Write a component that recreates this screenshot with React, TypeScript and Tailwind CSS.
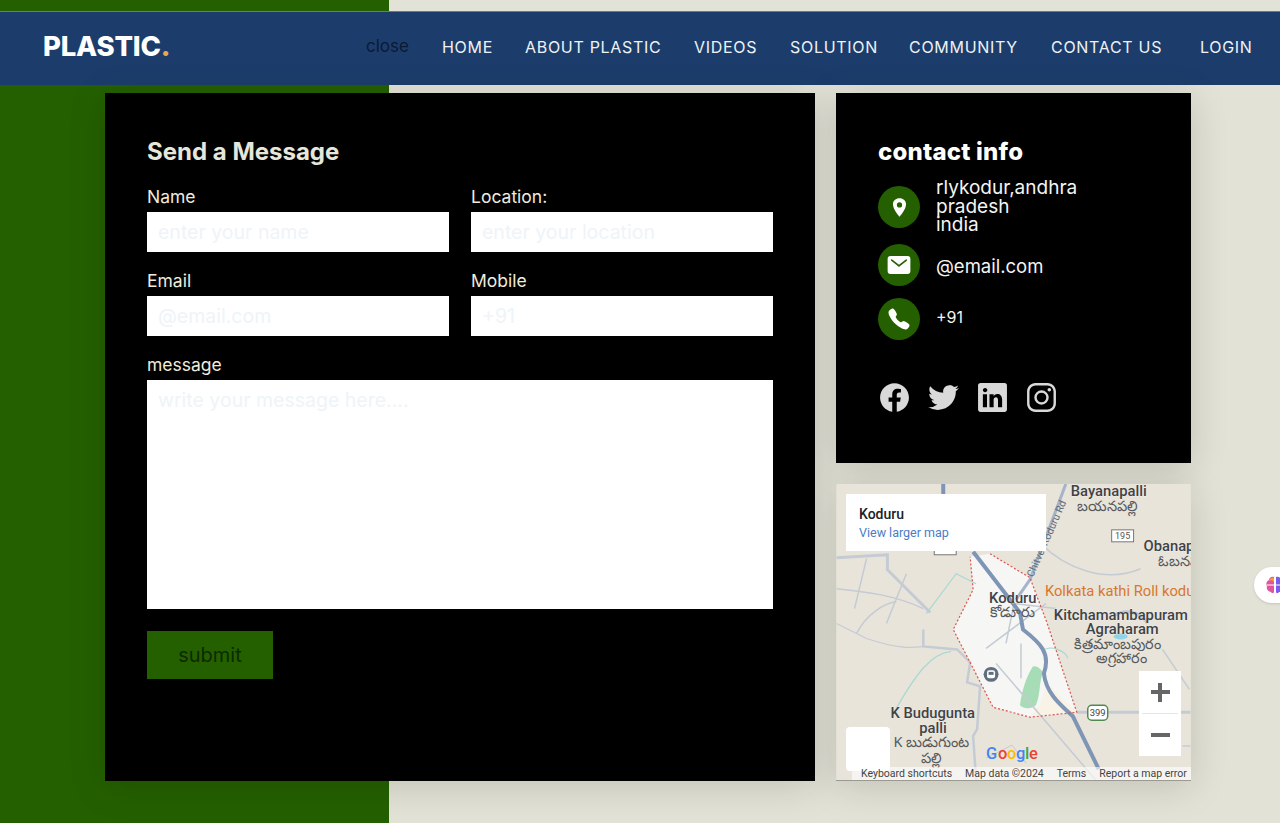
import { IoCall, IoLocationSharp, IoLogoFacebook, IoLogoInstagram, IoLogoLinkedin, IoLogoTwitter, IoMail } from "react-icons/io5";

const navItems = [
  { label: "HOME", width: "w-[51px]" },
  { label: "ABOUT PLASTIC", width: "w-[137px]" },
  { label: "VIDEOS", width: "w-[64px]" },
  { label: "SOLUTION", width: "w-[87px]" },
  { label: "COMMUNITY", width: "w-[110px]" },
  { label: "CONTACT US", width: "w-[117px]" },
  { label: "LOGIN", width: "w-[54px]" },
];

const inputClass =
  "w-full h-10 bg-white px-[11px] text-[19.5px] text-black placeholder-[#eef4f8] outline-none";

function Field({ label, placeholder }: { label: string; placeholder: string }) {
  return (
    <label className="flex flex-col">
      <span className="h-6 text-[17.5px] leading-[18px] text-[#f0ebdc]">{label}</span>
      <input placeholder={placeholder} className={inputClass} />
    </label>
  );
}

function MapDrawing() {
  return (
    <svg viewBox="0 0 355 297" className="block w-full h-full" fontFamily="Roboto, sans-serif">
      <rect width="355" height="297" fill="#e8e4da" />
      {/* town area */}
      <path d="M154 70 194 94 211 139 241 229 194 234 157 224 117 146 137 106 134 73Z" fill="#f6f6f5" />
      <path d="M184 222C186 205 192 190 197 183 201 182 206 186 207 190 203 198 205 210 200 222 195 226 188 226 184 222Z" fill="#a6dcb6" />
      <path d="M211 200 241 229 194 234 204 222Z" fill="#f8f3e6" />
      {/* small roads */}
      <g fill="none" stroke="#c4cbd4" strokeWidth="1.5">
        <path d="M0 74 51 71V86L94 129" strokeWidth="3" />
        <path d="M0 105C30 108 60 112 87 125M20 150C30 130 48 120 60 118M30 75 18 125M70 90 50 140" />
        <path d="M87 146V163L121 166 134 179 131 199 144 203 141 246 137 253 140 297" strokeWidth="2.5" />
        <path d="M0 140 30 155C60 165 75 165 87 163" strokeWidth="1.2" />
        <path d="M150 165 210 120M160 180 260 297M170 160 178 120 220 125M185 160V195" />
        <path d="M241 229H355" strokeWidth="3" />
        <path d="M205 60C230 85 270 100 305 85M327 166 354 206M347 263H355" />
        <path d="M190 280 176 262 150 275" strokeWidth="1" />
      </g>
      <path d="M60 225C80 190 95 170 115 168M90 130 120 90 140 100" fill="none" stroke="#a9d8d4" strokeWidth="1.2" />
      <path d="M206 168C215 160 230 168 232 175" fill="none" stroke="#a9d8d4" strokeWidth="1.2" />
      <path d="M278 132C290 125 305 128 312 140" fill="none" stroke="#b9c6d6" strokeWidth="3" />
      <ellipse cx="285" cy="153" rx="7" ry="3" fill="#8fd3e8" />
      {/* highways */}
      <path d="M107 0V12M137 68 184 129 187 146C205 160 215 170 208 190 210 210 225 222 237 233L263 286" fill="none" stroke="#7f95b5" strokeWidth="4" />
      <path d="M230 0 194 96 180 116" fill="none" stroke="#a5b4c8" strokeWidth="3" />
      {/* boundary */}
      <path d="M154 70 194 94 211 139 241 229 194 234 157 224 117 146 137 106 134 73" fill="none" stroke="#d9534f" strokeWidth="1.2" strokeDasharray="2 2" />
      {/* station pin */}
      <circle cx="155" cy="191" r="7.5" fill="#5f6f7e" />
      <rect x="151" y="187" width="8" height="8" rx="2" fill="#fff" />
      <rect x="152.5" y="188.5" width="5" height="3" fill="#5f6f7e" />
      {/* shields */}
      <rect x="98" y="60" width="22" height="11" fill="#fff" stroke="#777" />
      <rect x="276" y="46" width="22" height="12" fill="#fff" stroke="#777" />
      <text x="287" y="55.5" fontSize="9" textAnchor="middle" fill="#555">195</text>
      <rect x="252" y="222" width="20" height="15" rx="4" fill="#fff" stroke="#4f8a4f" strokeWidth="1.5" />
      <text x="262" y="233" fontSize="9.5" textAnchor="middle" fill="#444">399</text>
      {/* labels */}
      <g fill="#3f4246" fontWeight="500" fontSize="14.8" stroke="#fff" strokeWidth="0.3" paintOrder="stroke">
        <text x="235" y="12">Bayanapalli</text>
        <text x="308" y="67">Obanap</text>
        <text x="153" y="119">Koduru</text>
        <text x="218" y="136">Kitchamambapuram</text>
        <text x="250" y="151">Agraharam</text>
        <text x="54" y="235">K Budugunta</text>
        <text x="83" y="250">palli</text>
      </g>
      <g fill="#55585c" fontSize="14.5" fontFamily="'Noto Sans', 'DejaVu Sans', sans-serif">
        <text x="241" y="27">బయనపల్లి</text>
        <text x="322" y="82">ఓబనప</text>
        <text x="154" y="133">కోడూరు</text>
        <text x="238" y="166">కిత్రమాంబపురం</text>
        <text x="260" y="180">అగ్రహారం</text>
        <text x="57" y="264">K బుడుగుంట</text>
        <text x="85" y="280">పల్లి</text>
      </g>
      <text x="209" y="112" fontSize="14.8" fill="#d9772b">Kolkata kathi Roll kodu</text>
      <text x="0" y="0" fontSize="10.5" fill="#5d6b7a" transform="translate(197 94) rotate(-66)">Chitvel Koduru Rd</text>
      <g fontSize="16.5" fontWeight="500">
        <text x="150" y="276" fill="#4285f4">G</text>
        <text x="162" y="276" fill="#ea4335">o</text>
        <text x="171" y="276" fill="#fbbc05">o</text>
        <text x="180" y="276" fill="#4285f4">g</text>
        <text x="189" y="276" fill="#34a853">l</text>
        <text x="193" y="276" fill="#ea4335">e</text>
      </g>
    </svg>
  );
}

function MapPanel() {
  return (
    <div className="relative h-[297px] shadow-[0_5px_35px_rgba(0,0,0,0.15)] border-b border-[#9a9a92]">
      <MapDrawing />
      <div className="absolute left-[10px] top-[10px] w-[200px] h-[57px] bg-white pl-[13px] pt-[11px] font-['Roboto',sans-serif]">
        <p className="text-[14px] leading-[18px] font-medium text-[#202124]">Koduru</p>
        <p className="text-[12.5px] leading-[20px] text-[#4a7cc4]">View larger map</p>
      </div>
      <div className="absolute left-[10px] top-[243px] w-[44px] h-[44px] rounded-sm bg-white" />
      <div className="absolute left-[303px] top-[187px] w-[42px] h-[85px] bg-white flex flex-col items-center text-[#666]">
        <div className="h-[42px] w-full flex items-center justify-center">
          <span className="block relative w-[19px] h-[19px] bg-[linear-gradient(#666,#666),linear-gradient(#666,#666)] bg-no-repeat bg-center bg-[length:19px_4px,4px_19px]" />
        </div>
        <div className="h-px w-[36px] bg-[#e6e6e6]" />
        <div className="h-[42px] w-full flex items-center justify-center">
          <span className="block w-[19px] h-1 bg-[#666]" />
        </div>
      </div>
      <div className="absolute left-[16px] right-0 bottom-0 h-[13px] bg-white/60 flex items-center gap-[13px] pl-[9px] text-[10.5px] whitespace-nowrap text-[#444] font-['Roboto',sans-serif]">
        <span>Keyboard shortcuts</span>
        <span>Map data ©2024</span>
        <span>Terms</span>
        <span>Report a map error</span>
      </div>
    </div>
  );
}

export default function App() {
  return (
    <div className="relative h-[823px] overflow-hidden pt-[11px] bg-[linear-gradient(to_right,#246000_389px,#e2e2d6_389px)] font-['Inter',sans-serif]">
      <header className="h-[74px] pb-[3px] bg-[#1c3d6b] border-t border-[#5f7a9c] flex items-center pl-[43px] pr-[26px]">
        <div className="text-[27.5px] font-extrabold text-white tracking-[-0.2px]">
          PLASTIC<span className="text-[#e8a84c]">.</span>
        </div>
        <nav className="ml-auto flex items-center gap-8">
          <a className="w-[44px] text-[17px] whitespace-nowrap text-[#0b1a34]">close</a>
          {navItems.map(item => (
            <a key={item.label} className={`${item.width} text-[16px] tracking-[0.7px] whitespace-nowrap text-[#eef2f6]`}>
              {item.label}
            </a>
          ))}
        </nav>
      </header>

      <main className="mt-2 ml-[105px] flex gap-[21px] items-start">
        <section className="w-[710px] h-[688px] bg-black p-[42px] shadow-[0_5px_35px_rgba(0,0,0,0.15)]">
          <h2 className="h-[33px] mb-5 text-[24px] leading-[33px] font-bold text-[#e6e6da]">Send a Message</h2>
          <form className="grid grid-cols-2 gap-x-[22px] gap-y-5">
            <Field label="Name" placeholder="enter your name" />
            <Field label="Location:" placeholder="enter your location" />
            <Field label="Email" placeholder="@email.com" />
            <Field label="Mobile" placeholder="+91" />
            <label className="col-span-2 flex flex-col">
              <span className="h-6 text-[17.5px] leading-[18px] text-[#f0ebdc]">message</span>
              <textarea
                placeholder="write your message here...."
                className="h-[229px] w-full resize-none bg-white px-[11px] py-[6px] text-[19.5px] text-black placeholder-[#eef4f8] outline-none"
              />
            </label>
            <button type="button" className="w-[126px] h-12 mt-[2px] bg-[#246000] text-[20px] text-[#0d2b00]">
              submit
            </button>
          </form>
        </section>

        <aside className="w-[355px] flex flex-col gap-[21px]">
          <section className="h-[370px] bg-black px-[42px] pt-[42px] text-white shadow-[0_5px_35px_rgba(0,0,0,0.15)]">
            <h2 className="h-[33px] text-[24px] leading-[33px] font-extrabold tracking-[0.2px]">contact info</h2>
            <div className="mt-[18px] flex flex-col gap-4">
              <div className="flex gap-4 h-[42px]">
                <span className="w-[42px] h-[42px] shrink-0 rounded-full bg-[#246000] flex items-center justify-center text-[21px]">
                  <IoLocationSharp />
                </span>
                <p className="-mt-[7px] text-[19px] leading-[18.5px] text-[#f4f4f4]">
                  rlykodur,andhra<br />pradesh<br />india
                </p>
              </div>
              <div className="flex gap-4 items-center h-[42px]">
                <span className="w-[42px] h-[42px] shrink-0 rounded-full bg-[#246000] flex items-center justify-center text-[26px]">
                  <IoMail />
                </span>
                <p className="text-[18.5px] leading-[24px] mt-[2px] text-[#f4f4f4]">@email.com</p>
              </div>
              <div className="flex gap-4 items-center h-[42px] -mt-1">
                <span className="w-[42px] h-[42px] shrink-0 rounded-full bg-[#246000] flex items-center justify-center text-[24px]">
                  <IoCall />
                </span>
                <p className="text-[16px] leading-[20px] -mt-1 text-[#f4f4f4]">+91</p>
              </div>
            </div>
            <div className="mt-[41px] flex gap-4 text-[33px] text-[#d9d9d9]">
              <IoLogoFacebook />
              <IoLogoTwitter />
              <IoLogoLinkedin />
              <IoLogoInstagram />
            </div>
          </section>
          <MapPanel />
        </aside>
      </main>

      {/* floating extension button */}
      <div className="absolute left-[1254px] top-[567px] w-[50px] h-9 rounded-full bg-white flex items-center pl-[11px] shadow-sm">
        <svg width="20" height="20" viewBox="0 0 20 20">
          <path d="M9 2C6 1 4 3 4 5 1 6 1 10 2 11 1 14 3 17 6 17 7 19 9 18 9 17Z" fill="#e0569e" />
          <path d="M4 6C6 5 8 6 9 7V3C7 2 5 3 4 6Z" fill="#f59a3c" />
          <path d="M11 2C14 1 16 3 16 5 19 6 19 10 18 11 19 14 17 17 14 17 13 19 11 18 11 17Z" fill="#7b5cf0" />
          <path d="M2 10H9M11 10H18" stroke="#fff" strokeWidth="1" />
        </svg>
      </div>
    </div>
  );
}
